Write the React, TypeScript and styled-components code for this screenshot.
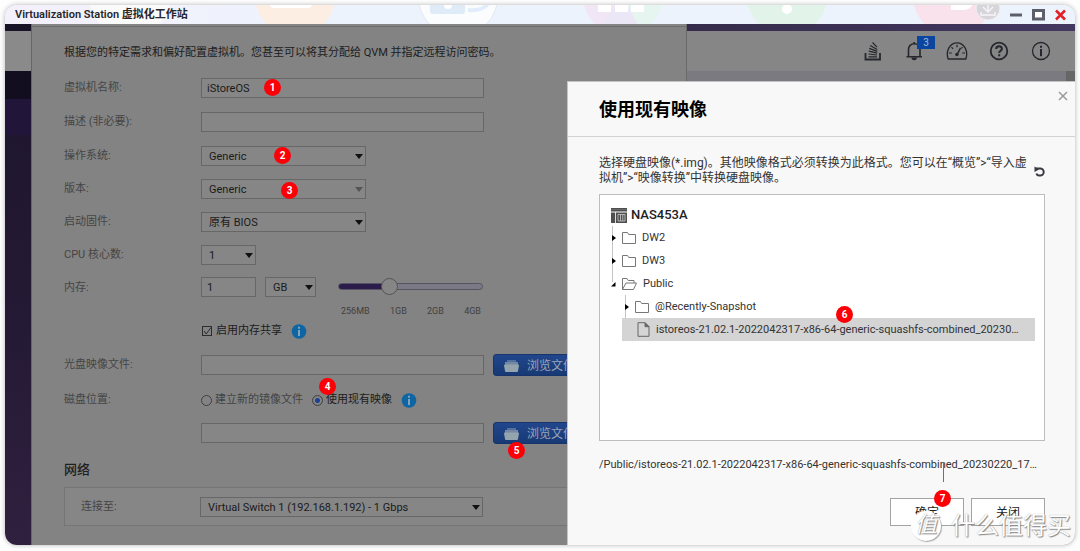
import React from 'react';
import styled, { createGlobalStyle, css } from 'styled-components';

const GlobalStyle = createGlobalStyle`
  *, *::before, *::after { box-sizing: border-box; }
  body {
    margin: 0;
    background: #fefefe;
    font-family: Roboto, "Noto Sans CJK SC", sans-serif;
    font-size: 11px;
    line-height: 16px;
    color: #222;
  }
  button, input, select { font: inherit; color: inherit; margin: 0; }
  ul { list-style: none; margin: 0; padding: 0; }
  h1, h2, h3, p { margin: 0; }
`;

const Page = styled.div`
  padding: 5px 5px 6px;
`;

const Window = styled.div`
  position: relative;
  display: flex;
  flex-direction: column;
  min-height: calc(100vh - 11px);
  border-radius: 12px;
  overflow: hidden;
  box-shadow: 0 0 5px rgba(0, 0, 0, 0.3);
`;

const WindowShell = styled.div`
  position: relative;
`;

/* ---------- title bar ---------- */

const TitleBar = styled.header`
  position: relative;
  display: flex;
  align-items: center;
  justify-content: space-between;
  height: 19px;
  padding: 0 9px 0 10px;
  overflow: hidden;
  background: linear-gradient(90deg, #f4f0fb 0, #f1f2fc 15%, #ecf3fd 30%, #ecf3fd 100%);
`;

const Wallpaper = styled.svg`
  position: absolute;
  top: 0;
  left: 0;
`;

const WindowTitle = styled.h1`
  position: relative;
  font-size: 11px;
  font-weight: 600;
  line-height: 18px;
  color: #26262c;
`;

const WindowControls = styled.div`
  position: relative;
  display: flex;
  align-items: center;
  gap: 10px;
`;

const PlainButton = styled.button`
  display: flex;
  align-items: center;
  justify-content: center;
  padding: 0;
  border: 0;
  background: none;
  cursor: pointer;
`;

/* ---------- body ---------- */

const Body = styled.div`
  position: relative;
  flex: 1;
  display: grid;
  grid-template-columns: 26px minmax(0, 656fr) minmax(0, 388fr);
`;

const Rail = styled.nav`
  display: flex;
  flex-direction: column;
  background: linear-gradient(#1c142c, #251a35 60%, #30203f);
`;

const RailPart = styled.div<{ $height: number; $color: string }>`
  height: ${(p) => p.$height}px;
  background: ${(p) => p.$color};
`;

const Panel = styled.main`
  min-width: 0;
  padding: 0 32px 19px;
  border-left: 1px solid #666;
  border-right: 1px solid #696969;
  background: linear-gradient(#858585 2px, #6e6e6e 2px, #6e6e6e 3px, #838383 3px);
`;

const Intro = styled.p`
  padding: 21px 0 16px;
  color: #1c1c1c;
  white-space: nowrap;
`;

const Form = styled.form`
  display: flex;
  flex-direction: column;
  gap: 13px;
`;

const Group = styled.div<{ $gap: number }>`
  display: flex;
  flex-direction: column;
  gap: ${(p) => p.$gap}px;
`;

const Row = styled.div<{ $tall?: boolean }>`
  display: grid;
  grid-template-columns: 137px minmax(0, 1fr);
  height: ${(p) => (p.$tall ? 22 : 20)}px;
`;

const MemoryRow = styled(Row)`
  height: 38px;
`;

const Label = styled.label`
  line-height: 22px;
  color: #454545;
`;

const Fields = styled.div`
  position: relative;
  display: flex;
  align-items: center;
  height: 100%;
  gap: 9px;
  white-space: nowrap;
`;

const field = css`
  height: 20px;
  border: 1px solid #676767;
  border-radius: 0;
  background: #868686;
  color: #1b1b1b;
  outline: 0;
`;

const TextInput = styled.input<{ $width?: number }>`
  ${field}
  flex: none;
  width: ${(p) => p.$width ?? 283}px;
  padding: 1px 5px 0;
`;

const SelectBox = styled.span<{ $width: number; $muted?: boolean }>`
  position: relative;
  flex: none;
  display: block;
  width: ${(p) => p.$width}px;

  &::after {
    content: '';
    position: absolute;
    top: 8px;
    right: 3px;
    border: 4px solid transparent;
    border-top: 5px solid ${(p) => (p.$muted ? '#555' : '#111')};
    border-bottom: 0;
    pointer-events: none;
  }
`;

const Select = styled.select`
  ${field}
  display: block;
  width: 100%;
  padding: 1px 14px 0 7px;
  appearance: none;
  opacity: 1;
`;

const MemoryFields = styled.div`
  display: flex;
  gap: 9px;
`;

const SliderBlock = styled.div`
  width: 145px;
  margin-left: 13px;
`;

const Slider = styled.input`
  display: block;
  width: 100%;
  height: 18px;
  appearance: none;
  background: none;

  &::-webkit-slider-runnable-track {
    height: 7px;
    border: 1px solid #555461;
    border-radius: 4px;
    background: linear-gradient(90deg, #2b1c4b 35%, #7b7985 35%);
  }
  &::-webkit-slider-thumb {
    appearance: none;
    width: 17px;
    height: 17px;
    margin-top: -6px;
    border: 1px solid #555;
    border-radius: 50%;
    background: #868686;
  }
`;

const Ticks = styled.div`
  display: flex;
  justify-content: space-between;
  padding: 10px 2px 0 3px;
  font-size: 9px;
  line-height: 12px;
  color: #404040;
`;

const Choice = styled.label<{ $muted?: boolean }>`
  display: flex;
  align-items: center;
  gap: 3px;
  color: ${(p) => (p.$muted ? '#444' : '#1c1c1c')};
`;

const CheckHolder = styled.span`
  display: grid;
  width: 12px;
  height: 12px;
  & > * { grid-area: 1 / 1; }
`;

const CheckInput = styled.input`
  width: 10px;
  height: 10px;
  margin: 1px;
  appearance: none;
  border: 1px solid #2c2c2c;
`;

const RadioInput = styled.input`
  width: 11px;
  height: 11px;
  appearance: none;
  border: 1px solid #3f3f3f;
  border-radius: 50%;

  &:checked {
    background: radial-gradient(circle, #1b3f94 0, #1b3f94 2px, transparent 3px);
  }
`;

const Browse = styled.button`
  display: flex;
  flex: none;
  align-items: center;
  gap: 7px;
  height: 22px;
  padding: 1px 9px 0;
  border: 1px solid #17346b;
  border-radius: 3px;
  background: linear-gradient(#22468c, #183974);
  color: #9aa5b9;
  font-size: 12px;
`;

const SectionTitle = styled.h2`
  margin: 18px 0 9px;
  font-size: 13px;
  font-weight: 500;
  line-height: 16px;
  color: #1f1f1f;
`;

const Section = styled.section`
  display: grid;
  grid-template-columns: 119px minmax(0, 1fr);
  height: 39px;
  padding: 8px 16px 9px;
  border: 1px solid #757575;
  background: #868686;
`;

/* ---------- right header ---------- */

const Side = styled.div`
  display: flex;
  flex-direction: column;
  background: #7b7a81;
`;

const Accent = styled.div`
  height: 7px;
  background: linear-gradient(90deg, #352c4b, #443760);
`;

const Toolbar = styled.div`
  display: flex;
  align-items: center;
  justify-content: flex-end;
  gap: 20px;
  height: 40px;
  padding-right: 23px;
  background: #868686;
  color: #25272d;
`;

const ToolButton = styled(PlainButton)`
  position: relative;
  width: 22px;
  height: 22px;
`;

const Count = styled.span`
  position: absolute;
  top: -4px;
  left: 13px;
  width: 18px;
  height: 13px;
  background: #0a46a0;
  color: #a9b9d2;
  font-size: 10px;
  line-height: 14px;
  text-align: center;
`;

const ScrollStub = styled.div`
  align-self: flex-end;
  width: 9px;
  height: 10px;
  background: #666;
`;

/* ---------- dialog ---------- */

const Dialog = styled.section`
  position: absolute;
  top: 57px;
  right: 0;
  bottom: 0;
  display: flex;
  flex-direction: column;
  width: 508px;
  max-width: 100%;
  border: 1px solid #c4c4c4;
  border-width: 1px 0 0 1px;
  background: #f8f8f8;
`;

const DialogHead = styled.header`
  display: flex;
  justify-content: space-between;
  height: 55px;
  padding: 0 7px 0 31px;
  border-bottom: 1px solid #d2d2d2;
`;

const DialogTitle = styled.h2`
  font-size: 18px;
  font-weight: 700;
  line-height: 56px;
  color: #000;
`;

const CloseButton = styled(PlainButton)`
  width: 11px;
  height: 28px;
`;

const DialogBody = styled.div`
  flex: 1;
  display: flex;
  flex-direction: column;
  padding: 19px 30px 19px 31px;
`;

const Hint = styled.div`
  display: flex;
  align-items: center;
  justify-content: space-between;
  margin-bottom: 8px;
`;

const HintText = styled.p`
  font-size: 12px;
  line-height: 15px;
  color: #333;
  white-space: nowrap;
`;

const Tree = styled.div`
  flex: 1;
  min-height: 200px;
  padding: 8px 9px 8px 11px;
  border: 1px solid #bdbdbd;
  background: #fff;
`;

const TreeRoot = styled.div`
  display: flex;
  align-items: center;
  gap: 4px;
  height: 23px;
  font-size: 13px;
  font-weight: 500;
  color: #222;
`;

const TreeItem = styled.div<{ $selected?: boolean }>`
  position: relative;
  display: flex;
  align-items: center;
  gap: 6px;
  height: 23px;
  padding-left: ${(p) => (p.$selected ? 15 : 0)}px;
  margin-left: ${(p) => (p.$selected ? -2 : 0)}px;
  background: ${(p) => (p.$selected ? '#d4d4d4' : 'none')};
  color: #333;
  white-space: nowrap;
`;

const SubTree = styled.ul`
  padding-left: 13px;
`;

const Twist = styled.span<{ $half?: boolean }>`
  display: flex;
  align-items: center;
  width: 5px;
  height: 23px;
  background: linear-gradient(#c4c4c4, #c4c4c4) 1px 0 / 1px ${(p) => (p.$half ? '10px' : '100%')} no-repeat;
`;

const Path = styled.p`
  margin-top: 16px;
  overflow: hidden;
  font-size: 11px;
  line-height: 16px;
  color: #333;
  white-space: nowrap;
`;

const Actions = styled.footer`
  display: flex;
  justify-content: flex-end;
  gap: 7px;
  margin-top: 25px;
`;

const ActionSlot = styled.div`
  position: relative;
`;

const ActionButton = styled.button`
  width: 74px;
  height: 28px;
  padding: 1px 0 0;
  border: 1px solid #a3a3a3;
  background: #fff;
  color: #222;
  font-size: 12px;
`;

/* ---------- annotations ---------- */

const Pin = styled.span<{ $x: number; $y: number }>`
  position: absolute;
  left: ${(p) => p.$x}px;
  top: ${(p) => p.$y}px;
  z-index: 2;
  width: 17px;
  height: 17px;
  border-radius: 50%;
  background: #fb0007;
  color: #fff;
  font-size: 10px;
  font-weight: 700;
  line-height: 17px;
  text-align: center;
`;

const Stem = styled.span`
  position: absolute;
  left: 53px;
  top: -36px;
  width: 1px;
  height: 20px;
  background: #d9405c;
`;

const Watermark = styled.div`
  position: absolute;
  right: 4px;
  bottom: 4px;
  z-index: 3;
  display: flex;
  align-items: center;
  gap: 10px;
  color: #fff;
  font-size: 24px;
  line-height: 30px;
  text-shadow: 1px 1px 1px #888, 0 0 1px #999;
  pointer-events: none;
`;

const WatermarkSeal = styled.span`
  width: 30px;
  height: 30px;
  border-radius: 50%;
  background: #fff;
  box-shadow: 1px 1px 1px #aaa;
  font-size: 22px;
  font-style: italic;
  line-height: 28px;
  text-align: center;
`;

/* ---------- drawings ---------- */

const TitleWallpaper = () => (
  <Wallpaper width="1070" height="19" viewBox="0 0 1070 19" aria-hidden="true">
    <circle cx="125" cy="-9" r="41" fill="#fafafa" />
    <circle cx="290" cy="-9" r="40" fill="#fdeee3" />
    <rect x="265" y="-6" width="42" height="9" rx="4" fill="#fff" />
    <circle cx="453" cy="-9" r="40" fill="#fafcfe" stroke="#e3e8ef" />
    <rect x="425" y="-8" width="35" height="17" rx="3" fill="#dfebf6" />
    <circle cx="443" cy="0" r="4" fill="#fff" />
    <path d="M463 5c10 1 18-2 21-8" fill="none" stroke="#e2edfb" strokeWidth="4" />
    <circle cx="618" cy="-9" r="40" fill="#e6f5ef" />
    <path d="M618-9l-22 33a40 40 0 0 1-18-33z" fill="#f1e6f6" />
    <path d="M618-9l-24 32a40 40 0 0 0 42 3z" fill="#ebe7f6" />
    <path d="M593-5h13V7h-13zM610-5h13V7h-13zM626-5h13V7h-13z" fill="#fff" />
    <circle cx="782" cy="-9" r="40" fill="#e2f4e9" />
    <circle cx="782" cy="4" r="5" fill="#fff" />
    <circle cx="948" cy="-9" r="40" fill="#fae2ed" />
    <path d="M946-3h22q-1 8-10 8h-12z" fill="#fff" />
    <circle cx="983" cy="3" r="12" fill="#d7d5da" stroke="#eef0f4" />
    <path d="M983-5v11M978 2l5 5 5-5M976 7v3h14V7" fill="none" stroke="#f6f6f8" strokeWidth="1.4" />
  </Wallpaper>
);

const StackIcon = () => (
  <svg width="18" height="20" viewBox="0 0 18 20" fill="none" stroke="currentColor">
    <path d="M1.500 12v6.500h14.500V12" strokeWidth="1.800" />
    <path d="M4.500 15.800h8.500M4.500 13l8.500 1M4.800 10.200l8.400 2M5.200 7.400l8 3M6.200 4.600l7 4M8.500 1.500l4.500 4.700" strokeWidth="1.200" />
  </svg>
);

const BellIcon = () => (
  <svg width="20" height="20" viewBox="0 0 20 20" fill="none" stroke="currentColor" strokeWidth="1.600">
    <path d="M1.500 15.800h15.500M3.500 15.500V8.500C3.500 5 6 2.800 9.200 2.800S15 5 15 8.500v7M9.200 2.500V1" />
    <path d="M6.500 16.500h5.400a2.700 2.700 0 0 1-5.400 0z" fill="currentColor" stroke="none" />
  </svg>
);

const GaugeIcon = () => (
  <svg width="22" height="20" viewBox="0 0 22 20" fill="none" stroke="currentColor">
    <path d="M2.200 18C-.7 10 4 1.800 11 1.800S22.700 10 19.800 18z" strokeWidth="1.300" />
    <path d="M11 3.800v2.400M5.500 6.200l1.600 1.600M16.500 6.200l-1.200 1.200M3 12h2.800M16.200 12H19" strokeWidth="1.200" />
    <path d="M14.500 7l-3.200 6.200" strokeWidth="1.500" />
    <circle cx="10.900" cy="13.500" r="1.700" fill="currentColor" stroke="none" />
  </svg>
);

const HelpIcon = () => (
  <svg width="20" height="20" viewBox="0 0 20 20" fill="none" stroke="currentColor">
    <circle cx="10" cy="10" r="8.300" strokeWidth="1.800" />
    <path d="M7.200 8c0-3.600 5.700-3.600 5.700-.2 0 2-2.700 2-2.700 4.200M10.200 13.200v2" strokeWidth="2" />
  </svg>
);

const InfoOutlineIcon = () => (
  <svg width="20" height="20" viewBox="0 0 20 20" fill="none" stroke="currentColor">
    <circle cx="10" cy="10" r="8.500" strokeWidth="1.300" />
    <path d="M10 8v7.200M10 4.800v2" strokeWidth="2" />
  </svg>
);

const InfoIcon = () => (
  <svg width="16" height="16" viewBox="0 0 16 16" role="img" aria-label="info">
    <circle cx="8" cy="8.500" r="7.300" fill="#0e65a3" />
    <path d="M8 7v6M8 3.800v1.900" stroke="#8fa9bd" strokeWidth="1.800" />
  </svg>
);

const DiskIcon = () => (
  <svg width="17" height="14" viewBox="0 0 17 14" aria-hidden="true">
    <path d="M4 1h9v2H4z" fill="#54709c" />
    <path d="M2 3h13v3H2z" fill="#7488a6" />
    <path d="M1 6.500q0-1 1-1h13q1 0 1 1L15 12q0 1-1 1H3q-1 0-1-1z" fill="#93a4ae" />
  </svg>
);

const NasIcon = () => (
  <svg width="16" height="16" viewBox="0 0 16 16" aria-hidden="true">
    <path d="M0 1h16v3.500H0zM0 5.500h4V16H0zM4.800 5.500H16V16H4.800z" fill="#4f4f4f" />
    <path d="M7 7.500h7V14H7zM9.500 7.500V14M11.800 7.500V14" fill="none" stroke="#ccc" strokeWidth=".8" />
    <path d="M0 2.500h16" stroke="#777" strokeWidth=".6" />
  </svg>
);

const FolderIcon = () => (
  <svg width="14" height="12" viewBox="0 0 14 12" fill="none" stroke="#777" aria-hidden="true">
    <path d="M.5 11.500V.5h5l1.200 2h6.800v9z" />
  </svg>
);

const OpenFolderIcon = () => (
  <svg width="15" height="12" viewBox="0 0 15 12" fill="none" stroke="#777" aria-hidden="true">
    <path d="M.5 11.500V.5h4.500l1.200 2H12v2.500M.5 11.500L4 5h10.500l-3 6.500z" />
  </svg>
);

const FileIcon = () => (
  <svg width="13" height="15" viewBox="0 0 13 15" fill="none" stroke="#666" aria-hidden="true">
    <path d="M1 .7h7L12 4.700v9.600H1z" />
    <path d="M8 .7V4.700h4z" fill="#666" />
  </svg>
);

const ClosedArrow = () => (
  <svg width="5" height="6" viewBox="0 0 5 6" aria-hidden="true"><path d="M1 0L5 3 1 6z" fill="#000" /></svg>
);

const OpenArrow = () => (
  <svg width="5" height="6" viewBox="0 0 5 6" aria-hidden="true"><path d="M4.500 1v4.500H0z" fill="#000" /></svg>
);

const RefreshIcon = () => (
  <svg width="11" height="12" viewBox="0 0 11 12" fill="none" stroke="#3a3a42" strokeWidth="2" aria-hidden="true">
    <path d="M1.500 3.500H6.200a3.500 3.500 0 0 1 0 7H5q-2 0-2.600-2" />
    <path d="M.5 1.500V7L5 4.500z" fill="#3a3a42" stroke="none" />
  </svg>
);

/* ---------- composed parts ---------- */

type DropProps = { id: string; width: number; value: string; muted?: boolean };

const Drop = ({ id, width, value, muted }: DropProps) => (
  <SelectBox $width={width} $muted={muted}>
    <Select id={id} disabled={muted} defaultValue={value}>
      <option value={value}>{value}</option>
    </Select>
  </SelectBox>
);

const BrowseButton = () => (
  <Browse type="button">
    <DiskIcon />
    浏览文件
  </Browse>
);

const FOLDERS = ['DW2', 'DW3'];
const FILE = 'istoreos-21.02.1-2022042317-x86-64-generic-squashfs-combined_20230…';
const FILE_PATH = '/Public/istoreos-21.02.1-2022042317-x86-64-generic-squashfs-combined_20230220_17…';

const VmForm = () => (
  <Form>
    <Group $gap={14}>
      <Row>
        <Label htmlFor="name">虚拟机名称:</Label>
        <Fields>
          <TextInput id="name" defaultValue="iStoreOS" />
          <Pin $x={63} $y={2}>1</Pin>
        </Fields>
      </Row>
      <Row>
        <Label htmlFor="desc">描述 (非必要):</Label>
        <Fields><TextInput id="desc" /></Fields>
      </Row>
      <Row>
        <Label htmlFor="os">操作系统:</Label>
        <Fields>
          <Drop id="os" width={165} value="Generic" />
          <Pin $x={73} $y={2}>2</Pin>
        </Fields>
      </Row>
    </Group>
    <Row>
      <Label htmlFor="version">版本:</Label>
      <Fields>
        <Drop id="version" width={165} value="Generic" muted />
        <Pin $x={80} $y={4}>3</Pin>
      </Fields>
    </Row>
    <Row>
      <Label htmlFor="firmware">启动固件:</Label>
      <Fields><Drop id="firmware" width={165} value="原有 BIOS" /></Fields>
    </Row>
    <Row>
      <Label htmlFor="cpu">CPU 核心数:</Label>
      <Fields><Drop id="cpu" width={55} value="1" /></Fields>
    </Row>
    <Group $gap={6}>
      <MemoryRow>
        <Label htmlFor="memory">内存:</Label>
        <MemoryFields>
          <TextInput id="memory" $width={55} defaultValue="1" />
          <Drop id="unit" width={51} value="GB" />
          <SliderBlock>
            <Slider type="range" aria-label="内存" min={0} max={3} defaultValue={1} />
            <Ticks>
              {['256MB', '1GB', '2GB', '4GB'].map((t) => <span key={t}>{t}</span>)}
            </Ticks>
          </SliderBlock>
        </MemoryFields>
      </MemoryRow>
      <Row>
        <span />
        <Fields>
          <Choice>
            <CheckHolder>
              <CheckInput type="checkbox" defaultChecked />
              <svg width="12" height="12" viewBox="0 0 12 12" fill="none" stroke="#2c2c2c" pointerEvents="none">
                <path d="M3 6l2.200 3L10 2.500" />
              </svg>
            </CheckHolder>
            启用内存共享
          </Choice>
          <InfoIcon />
        </Fields>
      </Row>
    </Group>
    <Row $tall>
      <Label htmlFor="iso">光盘映像文件:</Label>
      <Fields><TextInput id="iso" /><BrowseButton /></Fields>
    </Row>
    <Row>
      <Label as="span">磁盘位置:</Label>
      <Fields>
        <Choice $muted><RadioInput type="radio" name="disk" />建立新的镜像文件</Choice>
        <Choice><RadioInput type="radio" name="disk" defaultChecked />使用现有映像</Choice>
        <InfoIcon />
        <Pin $x={118} $y={-11}>4</Pin>
      </Fields>
    </Row>
    <Row $tall>
      <span />
      <Fields>
        <TextInput aria-label="映像路径" />
        <BrowseButton />
        <Pin $x={307} $y={20}>5</Pin>
      </Fields>
    </Row>
  </Form>
);

const ImageDialog = () => (
  <Dialog role="dialog" aria-labelledby="dialog-title">
    <DialogHead>
      <DialogTitle id="dialog-title">使用现有映像</DialogTitle>
      <CloseButton type="button" aria-label="close">
        <svg width="10" height="10" viewBox="0 0 10 10" stroke="#999" strokeWidth="1.500">
          <path d="M1 1l8 8M9 1L1 9" />
        </svg>
      </CloseButton>
    </DialogHead>
    <DialogBody>
      <Hint>
        <HintText>
          选择硬盘映像(*.img)。其他映像格式必须转换为此格式。您可以在“概览”&gt;“导入虚<br />
          拟机”&gt;“映像转换”中转换硬盘映像。
        </HintText>
        <PlainButton type="button" aria-label="refresh"><RefreshIcon /></PlainButton>
      </Hint>
      <Tree>
        <TreeRoot><NasIcon />NAS453A</TreeRoot>
        <ul>
          {FOLDERS.map((name) => (
            <li key={name}>
              <TreeItem><Twist><ClosedArrow /></Twist><FolderIcon />{name}</TreeItem>
            </li>
          ))}
          <li>
            <TreeItem><Twist $half><OpenArrow /></Twist><OpenFolderIcon />Public</TreeItem>
            <SubTree>
              <li>
                <TreeItem><Twist><ClosedArrow /></Twist><FolderIcon />@Recently-Snapshot</TreeItem>
              </li>
              <li>
                <TreeItem $selected>
                  <FileIcon />
                  {FILE}
                  <Pin $x={214} $y={-12}>6</Pin>
                </TreeItem>
              </li>
            </SubTree>
          </li>
        </ul>
      </Tree>
      <Path>{FILE_PATH}</Path>
      <Actions>
        <ActionSlot>
          <ActionButton type="button">确定</ActionButton>
          <Stem />
          <Pin $x={44} $y={-8}>7</Pin>
        </ActionSlot>
        <ActionButton type="button">关闭</ActionButton>
      </Actions>
    </DialogBody>
  </Dialog>
);

export default function App() {
  return (
    <Page>
      <GlobalStyle />
      <WindowShell>
        <Window>
          <TitleBar>
            <TitleWallpaper />
            <WindowTitle>Virtualization Station 虚拟化工作站</WindowTitle>
            <WindowControls>
              <PlainButton type="button" aria-label="minimize">
                <svg width="12" height="12" viewBox="0 0 12 12"><path d="M0 4.500h12v3H0z" fill="#5c5f6b" /></svg>
              </PlainButton>
              <PlainButton type="button" aria-label="maximize">
                <svg width="13" height="12" viewBox="0 0 13 12"><path d="M1.500 1.500h10v8.500h-10z" fill="#fff" stroke="#5c5f6b" strokeWidth="3" /></svg>
              </PlainButton>
              <PlainButton type="button" aria-label="close">
                <svg width="11" height="12" viewBox="0 0 11 12" stroke="#e2202a" strokeWidth="2.600"><path d="M1 1.500l9 9M10 1.500l-9 9" /></svg>
              </PlainButton>
            </WindowControls>
          </TitleBar>
          <Body>
            <Rail>
              <RailPart $height={7} $color="#191328" />
              <RailPart $height={40} $color="#8a8a8a" />
              <RailPart $height={28} $color="#130d20" />
              <RailPart $height={36} $color="#21163a" />
            </Rail>
            <Panel>
              <Intro>根据您的特定需求和偏好配置虚拟机。您甚至可以将其分配给 QVM 并指定远程访问密码。</Intro>
              <VmForm />
              <SectionTitle>网络</SectionTitle>
              <Section>
                <Label htmlFor="switch">连接至:</Label>
                <Fields><Drop id="switch" width={283} value="Virtual Switch 1 (192.168.1.192) - 1 Gbps" /></Fields>
              </Section>
            </Panel>
            <Side>
              <Accent />
              <Toolbar>
                <ToolButton type="button" aria-label="tasks"><StackIcon /></ToolButton>
                <ToolButton type="button" aria-label="notifications"><BellIcon /><Count>3</Count></ToolButton>
                <ToolButton type="button" aria-label="dashboard"><GaugeIcon /></ToolButton>
                <ToolButton type="button" aria-label="help"><HelpIcon /></ToolButton>
                <ToolButton type="button" aria-label="about"><InfoOutlineIcon /></ToolButton>
              </Toolbar>
              <ScrollStub />
            </Side>
            <ImageDialog />
          </Body>
        </Window>
        <Watermark>
          <WatermarkSeal>值</WatermarkSeal>
          <span>什么值得买</span>
        </Watermark>
      </WindowShell>
    </Page>
  );
}
